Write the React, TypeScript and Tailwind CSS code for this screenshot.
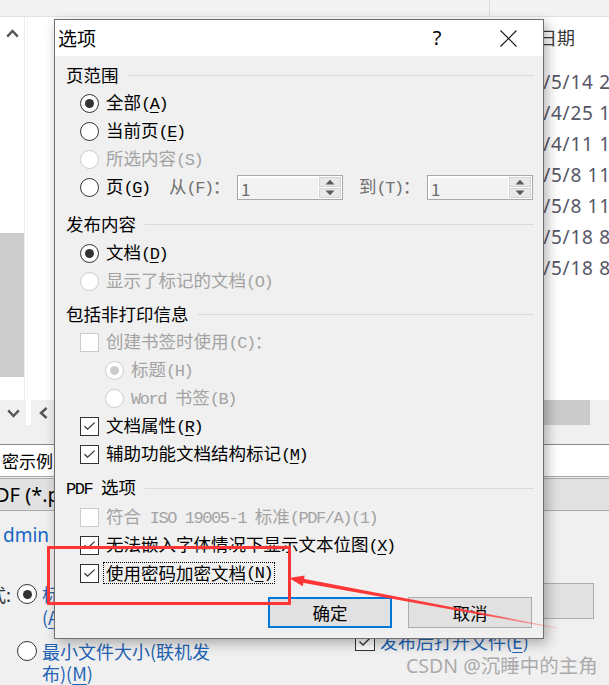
import React from "react";

function U({ children }: { children: React.ReactNode }) {
  return <span className="underline decoration-1 underline-offset-[3px]">{children}</span>;
}

function L({ children }: { children: React.ReactNode }) {
  return <span className="font-['Liberation_Mono',monospace] text-[17px] tracking-[-1.45px]">{children}</span>;
}

function Radio({ checked, disabled, size = 19 }: { checked?: boolean; disabled?: boolean; size?: number }) {
  return (
    <span
      className={`flex shrink-0 items-center justify-center rounded-full border bg-white ${
        disabled ? "border-[#cccccc]" : "border-[#333333]"
      } ${size === 19 ? "h-[19px] w-[19px]" : "h-[20px] w-[20px]"}`}
    >
      {checked && (
        <span className={`h-[9px] w-[9px] rounded-full ${disabled ? "bg-[#cccccc]" : "bg-[#333333]"}`} />
      )}
    </span>
  );
}

function Check({ checked, disabled }: { checked?: boolean; disabled?: boolean }) {
  return (
    <span
      className={`flex h-[19px] w-[19px] shrink-0 items-center justify-center border bg-white ${
        disabled ? "border-[#cccccc]" : "border-[#333333]"
      }`}
    >
      {checked && (
        <svg width="13" height="10" viewBox="0 0 13 10">
          <path d="M1.5 5.2 L4.6 8.2 L11.6 1.6" fill="none" stroke="#333333" strokeWidth="1.3" />
        </svg>
      )}
    </span>
  );
}

function Spin() {
  return (
    <div className="flex h-[25px] w-[106px] shrink-0 border border-[#a8a8a8] bg-[#f2f2f2]">
      <div className="flex flex-1 items-center border-t-2 border-l-2 border-white pl-[1px] text-[17px] leading-none text-[#6d6d6d]">
        1
      </div>
      <div className="flex w-[24px] flex-col gap-px bg-white p-px">
        <div className="flex flex-1 items-center justify-center border border-[#d4d4d4] bg-[#e8e8e8]">
          <svg width="10" height="6" viewBox="0 0 10 6">
            <path d="M0.5 5.5 L5 0.8 L9.5 5.5 Z" fill="#5a5a5a" />
          </svg>
        </div>
        <div className="flex flex-1 items-center justify-center border border-[#d4d4d4] bg-[#e8e8e8]">
          <svg width="10" height="6" viewBox="0 0 10 6">
            <path d="M0.5 0.5 L5 5.2 L9.5 0.5 Z" fill="#5a5a5a" />
          </svg>
        </div>
      </div>
    </div>
  );
}

function Header({ children, className = "" }: { children: React.ReactNode; className?: string }) {
  return (
    <div className={`flex h-[28px] items-center ${className}`}>
      <span className="leading-none text-black">{children}</span>
      <span className="ml-[9px] h-px flex-1 bg-[#dadada]" />
    </div>
  );
}

function Row({ children, indent = "pl-[14px]", className = "" }: { children: React.ReactNode; indent?: string; className?: string }) {
  return <div className={`flex h-[28px] items-center ${indent} ${className}`}>{children}</div>;
}

function Dialog() {
  return (
    <div className="absolute left-[54px] top-[19px] flex h-[620px] w-[490px] flex-col border border-[#707070] bg-[#f0f0f0] shadow-[3px_4px_12px_rgba(0,0,0,0.3)]">
      {/* title bar */}
      <div className="flex h-[36px] shrink-0 items-center bg-white font-['Noto_Sans_CJK_SC',sans-serif]">
        <span className="pl-[3px] pb-[2px] text-[19px] leading-none text-black">选项</span>
        <span className="flex-1" />
        <span className="flex w-[30px] justify-center text-[20px] leading-none text-black font-['Noto_Sans',sans-serif]">?</span>
        <span className="w-[41px]" />
        <span className="flex w-[30px] items-center justify-center">
          <svg width="17" height="17" viewBox="0 0 17 17">
            <path d="M0.5 0.5 L16.5 16.5 M16.5 0.5 L0.5 16.5" stroke="#111111" strokeWidth="1.1" />
          </svg>
        </span>
        <span className="w-[20px]" />
      </div>

      {/* body */}
      <div className="flex flex-1 flex-col pl-[11px] pr-[9px] pt-[5px] text-[17.5px] text-black font-['Noto_Sans_CJK_SC',sans-serif]">
        <Header>页范围</Header>
        <Row>
          <Radio checked />
          <span className="ml-[7px] leading-none">全部<L>(<U>A</U>)</L></span>
        </Row>
        <Row>
          <Radio />
          <span className="ml-[7px] leading-none">当前页<L>(<U>E</U>)</L></span>
        </Row>
        <Row>
          <Radio disabled />
          <span className="ml-[7px] leading-none text-[#a3a3a3]">所选内容<L>(S)</L></span>
        </Row>
        <Row>
          <Radio />
          <span className="ml-[7px] w-[63px] shrink-0 leading-none">页<L>(<U>G</U>)</L></span>
          <span className="w-[68px] shrink-0 leading-none text-[#707070]">从<L>(F)</L>：</span>
          <Spin />
          <span className="ml-[16px] w-[68px] shrink-0 leading-none text-[#707070]">到<L>(T)</L>：</span>
          <Spin />
        </Row>

        <Header className="mt-[9px]">发布内容</Header>
        <Row className="mt-px">
          <Radio checked />
          <span className="ml-[7px] leading-none">文档<L>(<U>D</U>)</L></span>
        </Row>
        <Row>
          <Radio disabled />
          <span className="ml-[7px] leading-none text-[#a3a3a3]">显示了标记的文档<L>(O)</L></span>
        </Row>

        <Header className="mt-[5px]">包括非打印信息</Header>
        <Row>
          <Check disabled />
          <span className="ml-[7px] leading-none text-[#a3a3a3]">创建书签时使用<L>(C)</L>：</span>
        </Row>
        <Row indent="pl-[39px]">
          <Radio checked disabled />
          <span className="ml-[7px] leading-none text-[#a3a3a3]">标题<L>(H)</L></span>
        </Row>
        <Row indent="pl-[39px]">
          <Radio disabled />
          <span className="ml-[7px] leading-none text-[#a3a3a3]"><L>{"Word "}</L>书签<L>(B)</L></span>
        </Row>
        <Row>
          <Check checked />
          <span className="ml-[7px] leading-none">文档属性<L>(<U>R</U>)</L></span>
        </Row>
        <Row>
          <Check checked />
          <span className="ml-[7px] leading-none">辅助功能文档结构标记<L>(<U>M</U>)</L></span>
        </Row>

        <Header className="mt-[6px]"><L>{"PDF "}</L>选项</Header>
        <Row className="mt-px">
          <Check disabled />
          <span className="ml-[7px] leading-none text-[#a3a3a3]">
            符合<L>{" ISO 19005-1 "}</L>标准<L>(PDF/A)(1)</L>
          </span>
        </Row>
        <Row>
          <Check checked />
          <span className="ml-[7px] leading-none">无法嵌入字体情况下显示文本位图<L>(<U>X</U>)</L></span>
        </Row>
        <Row>
          <Check checked />
          <span className="ml-[4px] flex h-[22px] items-center border border-dotted border-black px-[2px] leading-none">
            使用密码加密文档<L>(<U>N</U>)</L>
          </span>
        </Row>

        <div className="mt-[10px] flex justify-end gap-[16px] pr-[2px]">
          <button className="flex h-[31px] w-[124px] items-center justify-center border-2 border-[#0078d7] bg-[#e1e1e1] leading-none text-black">
            确定
          </button>
          <button className="flex h-[31px] w-[124px] items-center justify-center border border-[#adadad] bg-[#e1e1e1] leading-none text-black">
            取消
          </button>
        </div>
      </div>
    </div>
  );
}

function Background() {
  const dates = [
    "2021/5/14 22:15",
    "2021/4/25 10:32",
    "2021/4/11 15:08",
    "2021/5/8 11:20",
    "2021/5/8 11:26",
    "2021/5/18 8:41",
    "2021/5/18 8:45",
  ];
  return (
    <div className="flex h-full w-full flex-col font-['Noto_Sans_CJK_SC',sans-serif]">
      {/* top strip */}
      <div className="flex h-[17px] shrink-0 border-b border-[#e2e2e2] bg-[#f3f3f3]">
        <div className="w-[489px]" />
        <div className="w-px bg-[#dddddd]" />
      </div>

      {/* list area */}
      <div className="flex h-[383px] shrink-0 bg-white">
        <div className="flex w-[25px] shrink-0 flex-col border-r border-[#ededed]">
          <div className="flex h-[30px] items-center justify-center pt-[2px]">
            <svg width="13" height="9" viewBox="0 0 13 9">
              <path d="M1.2 7.6 L6.5 2 L11.8 7.6" fill="none" stroke="#555555" strokeWidth="2.4" />
            </svg>
          </div>
          <div className="mt-[186px] h-[144px] bg-[#cdcdcd]" />
        </div>
        <div className="w-[2px] shrink-0" />
        <div className="w-px shrink-0 bg-[#f2f2f2]" />
        <div className="flex-1" />
        <div className="flex w-[112px] shrink-0 flex-col overflow-hidden">
          <div className="flex h-[40px] items-center whitespace-nowrap pl-[6px] text-[18px] leading-none text-[#3a3a3a]">
            修改日期
          </div>
          <div className="mt-[10px] flex flex-col font-['Noto_Sans',sans-serif]">
            {dates.map((d, i) => (
              <div
                key={i}
                className="flex h-[31px] items-center whitespace-nowrap text-[19px] leading-none tracking-[0.7px] text-[#565666]"
              >
                {d}
              </div>
            ))}
          </div>
        </div>
      </div>

      {/* scroll controls row */}
      <div className="flex h-[44px] shrink-0 bg-[#f0f0f0]">
        <div className="flex h-[25px] w-[26px] items-center justify-center pt-[1px]">
          <svg width="13" height="9" viewBox="0 0 13 9">
            <path d="M1.2 1.4 L6.5 7 L11.8 1.4" fill="none" stroke="#555555" strokeWidth="2.4" />
          </svg>
        </div>
        <div className="h-[25px] w-[5px] bg-white" />
        <div className="flex h-[25px] w-[24px] items-center justify-center pt-[1px]">
          <svg width="9" height="12" viewBox="0 0 9 12">
            <path d="M7.6 1 L2 6 L7.6 11" fill="none" stroke="#555555" strokeWidth="2.4" />
          </svg>
        </div>
        <div className="flex-1" />
        <div className="h-[25px] w-[47px] bg-[#cbcbcb]" />
        <div className="w-[19px]" />
      </div>

      {/* file name row */}
      <div className="flex h-[32px] shrink-0 items-center whitespace-nowrap border-t border-[#8a8a8a] bg-white pl-[2px] text-[17px] leading-none text-black">
        密示例
      </div>
      <div className="h-[2px] shrink-0 border-t border-[#a9a9a9] bg-[#f0f0f0]" />
      {/* type row */}
      <div className="flex h-[33px] shrink-0 items-center whitespace-nowrap border-y border-[#acacac] bg-[#e1e1e1] text-[20px] leading-none text-black font-['Noto_Sans',sans-serif]">
        <span className="-ml-[5px]">DF (*.pdf)</span>
      </div>

      {/* lower area */}
      <div className="flex flex-1 bg-[#f0f0f0]">
        <div className="flex w-[355px] shrink-0 flex-col">
          <div className="mt-[12px] flex h-[24px] items-center pl-[3px] text-[19px] leading-none text-[#1666c5] font-['Noto_Sans',sans-serif]">
            dmin
          </div>
          <div className="mt-[36px] flex items-start">
            <span className="-ml-[12px] w-[29px] shrink-0 text-[18px] leading-[23px] text-[#333333]">式:</span>
            <span className="mt-[1px]">
              <Radio checked size={20} />
            </span>
            <span className="ml-[5px] whitespace-nowrap text-[18px] leading-[23px] text-[#1f64b4]">
              标准(联机发布和打印)
              <br />
              (<U>A</U>)
            </span>
          </div>
          <div className="mt-[11px] flex items-start pl-[17px]">
            <span className="mt-[1px]">
              <Radio size={20} />
            </span>
            <span className="ml-[5px] whitespace-nowrap text-[18px] leading-[22px] text-[#1f64b4]">
              最小文件大小(联机发
              <br />
              布)(<U>M</U>)
            </span>
          </div>
        </div>
        <div className="flex w-[188px] shrink-0 flex-col">
          <div className="mt-[120px] flex items-center">
            <span className="flex h-[20px] w-[20px] items-center justify-center border border-[#333333] bg-white">
              <svg width="14" height="11" viewBox="0 0 14 11">
                <path d="M1.5 5.6 L5 9 L12.6 1.6" fill="none" stroke="#333333" strokeWidth="1.4" />
              </svg>
            </span>
            <span className="ml-[5px] whitespace-nowrap text-[18px] leading-none text-[#1f64b4]">
              发布后打开文件(<U>E</U>)
            </span>
          </div>
        </div>
        <div className="flex flex-1 flex-col">
          <div className="mt-[72px] h-[36px] w-[51px] border border-[#adadad] bg-[#e1e1e1]" />
        </div>
      </div>
    </div>
  );
}

export default function App() {
  return (
    <div className="relative h-[685px] w-[609px] overflow-hidden bg-[#f0f0f0]">
      <Background />
      <Dialog />
      {/* watermark */}
      <div className="pointer-events-none absolute left-[406px] top-[653px] whitespace-nowrap text-[19.5px] leading-[26px] text-[#ababab] font-['Noto_Sans','Noto_Sans_CJK_SC',sans-serif]">
        CSDN @沉睡中的主角
      </div>
      {/* red annotation */}
      <svg className="pointer-events-none absolute left-0 top-0" width="609" height="685" viewBox="0 0 609 685">
        <defs>
          <linearGradient id="fade" gradientUnits="userSpaceOnUse" x1="290" y1="579" x2="557" y2="628">
            <stop offset="0" stopColor="#ff3434" stopOpacity="1" />
            <stop offset="0.7" stopColor="#ff3434" stopOpacity="0.95" />
            <stop offset="1" stopColor="#ff3434" stopOpacity="0.15" />
          </linearGradient>
        </defs>
        <rect x="48.5" y="547.5" width="241" height="56" fill="none" stroke="#ff3434" strokeWidth="3" />
        <polygon points="302.1,578.4 557.1,627.4 556.9,628.6 301.3,582.4" fill="url(#fade)" />
        <polygon points="289,578 302.7,586.2 304.7,575.4" fill="#ff3434" />
      </svg>
    </div>
  );
}
